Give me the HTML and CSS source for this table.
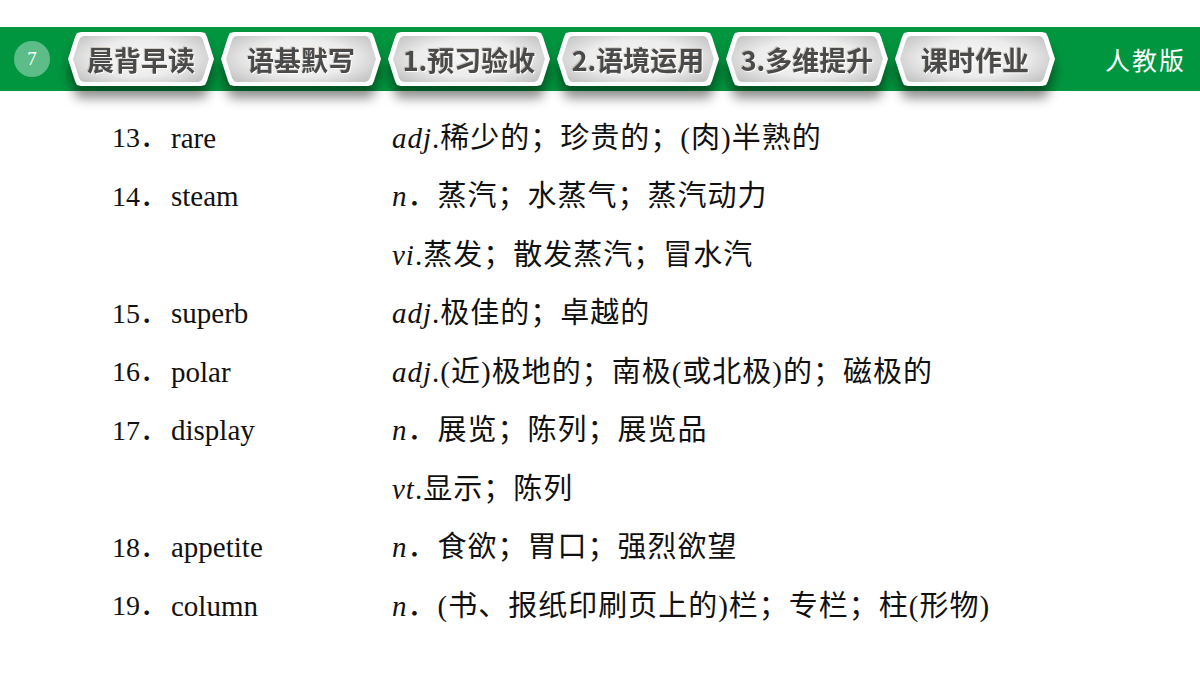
FILE: index.html
```html
<!DOCTYPE html>
<html lang="zh">
<head>
<meta charset="utf-8">
<link rel="stylesheet" href="styles.css">
</head>
<body>
<header class="bar">
  <div class="page-no">7</div>
  <nav class="tabs">
    <div class="tab-wrap w1"><div class="tab"><div class="face">晨背早读</div></div></div>
    <div class="tab-wrap w2"><div class="tab"><div class="face">语基默写</div></div></div>
    <div class="tab-wrap w3"><div class="tab"><div class="face">1.预习验收</div></div></div>
    <div class="tab-wrap w3"><div class="tab"><div class="face">2.语境运用</div></div></div>
    <div class="tab-wrap w3"><div class="tab"><div class="face">3.多维提升</div></div></div>
    <div class="tab-wrap w2"><div class="tab"><div class="face">课时作业</div></div></div>
  </nav>
  <div class="edition">人教版</div>
</header>
<main class="list">
  <div class="num">13．</div><div class="word">rare</div><div class="def"><i>adj</i>.稀少的；珍贵的；(肉)半熟的</div>
  <div class="num">14．</div><div class="word">steam</div><div class="def"><i>n</i>．蒸汽；水蒸气；蒸汽动力</div>
  <div class="num"></div><div class="word"></div><div class="def"><i>vi</i>.蒸发；散发蒸汽；冒水汽</div>
  <div class="num">15．</div><div class="word">superb</div><div class="def"><i>adj</i>.极佳的；卓越的</div>
  <div class="num">16．</div><div class="word">polar</div><div class="def"><i>adj</i>.(近)极地的；南极(或北极)的；磁极的</div>
  <div class="num">17．</div><div class="word">display</div><div class="def"><i>n</i>．展览；陈列；展览品</div>
  <div class="num"></div><div class="word"></div><div class="def"><i>vt</i>.显示；陈列</div>
  <div class="num">18．</div><div class="word">appetite</div><div class="def"><i>n</i>．食欲；胃口；强烈欲望</div>
  <div class="num">19．</div><div class="word">column</div><div class="def"><i>n</i>．(书、报纸印刷页上的)栏；专栏；柱(形物)</div>
</main>
</body>
</html>
```
FILE: styles.css
```css
html, body {
  margin: 0;
  padding: 0;
  background: #ffffff;
}
body {
  width: 1200px;
  height: 675px;
  overflow: hidden;
}
.bar {
  margin-top: 27px;
  height: 64px;
  background: #00963f;
  display: flex;
  align-items: center;
  padding-left: 14px;
  box-sizing: border-box;
}
.page-no {
  width: 36px;
  height: 36px;
  border-radius: 50%;
  background: #5dbd88;
  color: #ffffff;
  font-family: "Liberation Serif", serif;
  font-size: 19px;
  display: flex;
  align-items: center;
  justify-content: center;
  flex: none;
}
.tabs {
  display: flex;
  gap: 7px;
  margin-left: 18px;
}
.tab-wrap {
  height: 54px;
  filter: drop-shadow(0 12px 6px rgba(0, 0, 0, 0.45));
}
.w1 { width: 146px; }
.w2 { width: 160px; }
.w3 { width: 162px; }
.tab {
  width: 100%;
  height: 100%;
  background: #ffffff;
  padding: 4px 5px;
  box-sizing: border-box;
  clip-path: polygon(0 50%, 7px 5px, 9px 1px, 13px 0, calc(100% - 13px) 0, calc(100% - 9px) 1px, calc(100% - 7px) 5px, 100% 50%, calc(100% - 7px) calc(100% - 5px), calc(100% - 9px) calc(100% - 1px), calc(100% - 13px) 100%, 13px 100%, 9px calc(100% - 1px), 7px calc(100% - 5px));
}
.face {
  width: 100%;
  height: 100%;
  clip-path: polygon(0 50%, 6px 4px, 8px 1px, 11px 0, calc(100% - 11px) 0, calc(100% - 8px) 1px, calc(100% - 6px) 4px, 100% 50%, calc(100% - 6px) calc(100% - 4px), calc(100% - 8px) calc(100% - 1px), calc(100% - 11px) 100%, 11px 100%, 8px calc(100% - 1px), 6px calc(100% - 4px));
  background: radial-gradient(ellipse 62% 72% at 50% 48%, #f7f7f7 0%, #ececec 55%, #c2c2c2 100%);
  display: flex;
  align-items: center;
  justify-content: center;
  font-family: "Noto Sans CJK SC", sans-serif;
  font-weight: 700;
  font-size: 27px;
  color: #4a4a4a;
  text-shadow: 1px 1px 0 rgba(255, 255, 255, 0.9), -1px -1px 0 rgba(120, 90, 60, 0.25);
}
.edition {
  margin-left: auto;
  margin-right: 14px;
  color: #ffffff;
  font-family: "Liberation Serif", "Noto Sans CJK SC", serif;
  font-size: 25px;
  letter-spacing: 2px;
}
.list {
  display: grid;
  grid-template-columns: 59px 221px 1fr;
  grid-auto-rows: 58.5px;
  padding: 18px 0 0 112px;
  font-family: "Liberation Serif", "Noto Sans CJK SC", serif;
  font-size: 28px;
  color: #111111;
  align-items: center;
}
.list i {
  font-style: italic;
}
.num, .word, .def {
  white-space: nowrap;
  line-height: 1;
}
.num {
  font-size: 28px;
}
.word {
  font-size: 29px;
}
.def {
  font-size: 29px;
  letter-spacing: 1px;
}
```
